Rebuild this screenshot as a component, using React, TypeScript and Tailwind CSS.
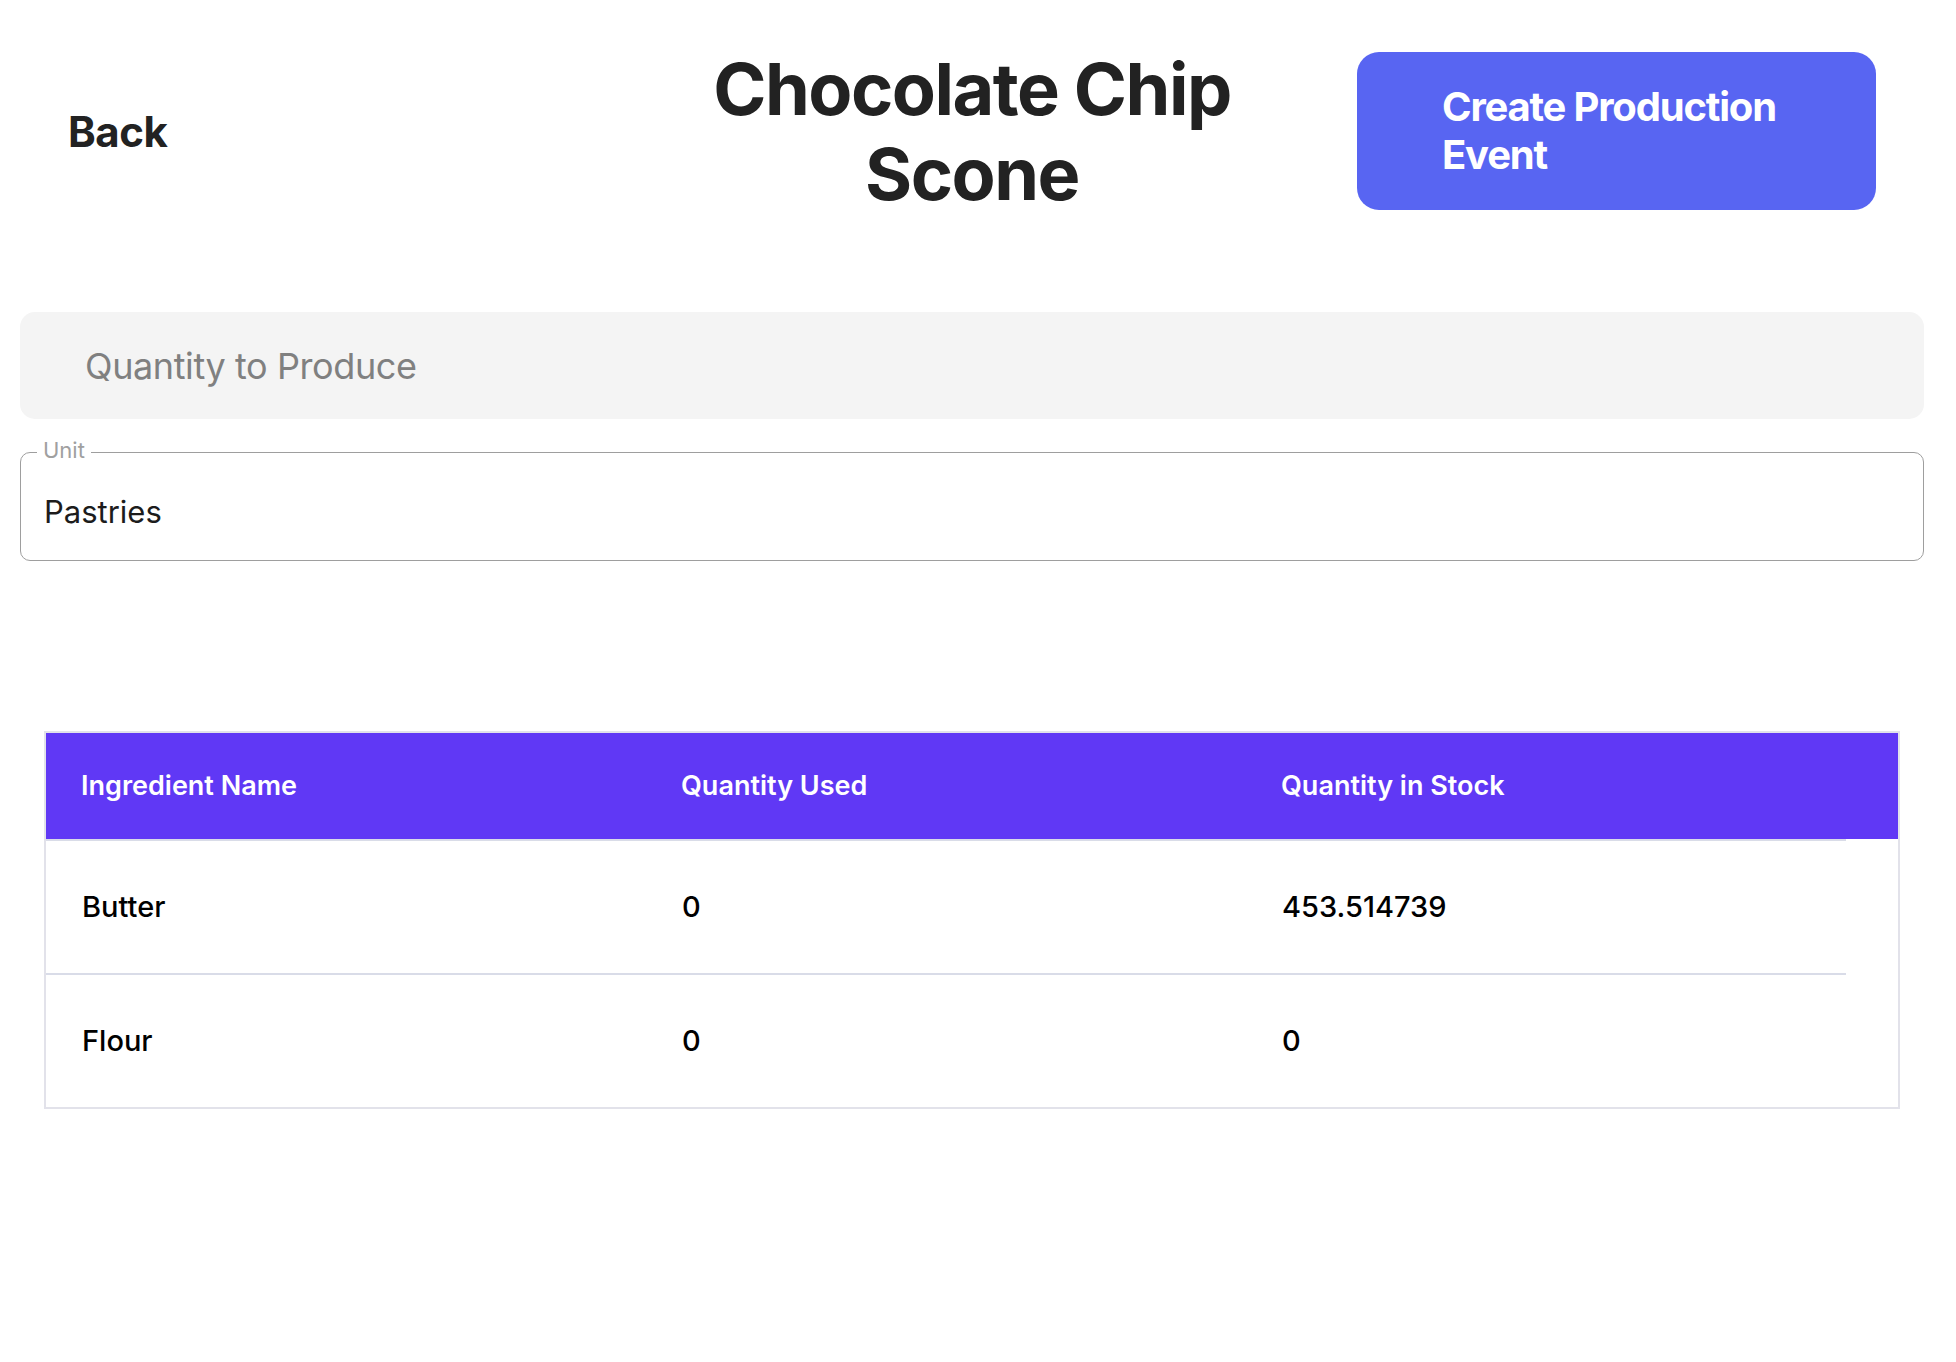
import React from 'react';

const ingredients = [
    { name: 'Butter', used: '0', stock: '453.514739' },
    { name: 'Flour', used: '0', stock: '0' },
];

export default function App() {
    return (
        <div className="min-h-screen bg-white font-['Inter','Noto_Sans',sans-serif] pb-[200px]">
            {/* Top bar */}
            <div className="flex items-center pt-[52px] h-[210px]">
                <div className="w-[672px] pl-[68px] text-[42px] font-bold text-[#222] tracking-[-0.5px]">Back</div>
                <h1 className="w-[600px] text-center text-[72px] leading-[85px] font-bold text-[#222] tracking-[-1.5px]">
                    Chocolate Chip Scone
                </h1>
                <button className="ml-auto mr-[80px] w-[519px] h-[158px] rounded-[22px] bg-[#5865f2] pl-[85px] pr-[40px] text-left text-[40px] leading-[48px] font-bold text-white tracking-[-1.2px]">
                    Create Production Event
                </button>
            </div>

            {/* Form fields */}
            <div className="pl-[20px] pr-[32px]">
                <div className="mt-[102px] h-[107px] rounded-[15px] bg-[#f4f4f4] px-[65px] flex items-center">
                    <span className="text-[36px] text-[#808080] tracking-[-0.4px]">Quantity to Produce</span>
                </div>

                <div className="relative mt-[33px] h-[109px] rounded-[10px] border-[1.5px] border-[#9e9e9e] px-[23px] pt-[11px] flex items-center">
                    <span className="absolute left-[16px] top-[-15px] bg-white px-[6px] text-[22px] leading-[25px] text-[#a0a0a0]">Unit</span>
                    <span className="text-[31px] text-[#1c1c1c]">Pastries</span>
                </div>

                {/* Ingredients table */}
                <div className="mx-[24px] mt-[170px] border-2 border-[#e2e2ea]">
                    <div className="flex h-[106px] items-center bg-[#6038f5]">
                        {['Ingredient Name', 'Quantity Used', 'Quantity in Stock'].map((h) => (
                            <div key={h} className="w-[600px] pl-[35px] text-[27px] font-semibold text-white">{h}</div>
                        ))}
                    </div>
                    <div className="w-[1800px] h-[2px] bg-[#d9dce8]" />
                    {ingredients.map((row, idx) => (
                        <div
                            key={row.name}
                            className={`flex w-[1800px] items-center ${idx < ingredients.length - 1 ? 'h-[134px] border-b-2 border-[#d9dce8]' : 'h-[132px]'}`}
                        >
                            <div className="w-[600px] pl-[36px] text-[29px] font-medium text-black">{row.name}</div>
                            <div className="w-[600px] pl-[36px] text-[29px] font-medium text-black">{row.used}</div>
                            <div className="w-[600px] pl-[36px] text-[29px] font-medium text-black">{row.stock}</div>
                        </div>
                    ))}
                </div>
            </div>
        </div>
    );
}
